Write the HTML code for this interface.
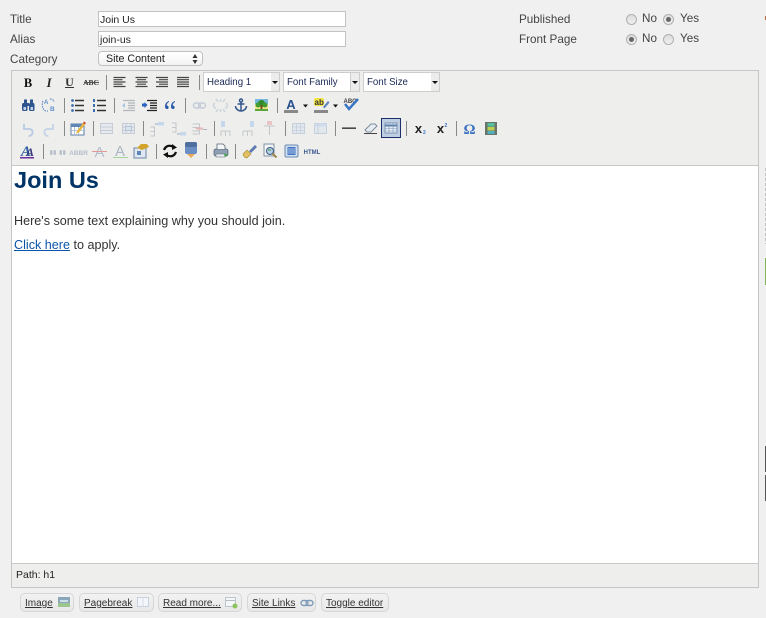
<!DOCTYPE html>
<html><head><meta charset="utf-8">
<style>
html,body{margin:0;padding:0;background:#f0f0f0;}
body{width:766px;height:618px;overflow:hidden;position:relative;font-family:"Liberation Sans",sans-serif;color:#3a3a3a;}
.a{position:absolute;white-space:nowrap;}
.lbl{font-size:11.7px;line-height:14px;color:#444;}
.inp{position:absolute;left:98px;height:14px;border:1px solid #c2c2c2;background:#fff;font-size:10.5px;line-height:16px;color:#222;padding-left:1px;width:245px;overflow:hidden;}
.radio{position:absolute;width:9px;height:9px;border-radius:50%;border:1px solid #b0b0b0;background:linear-gradient(#dcdcdc,#efefef);}
.radio.on:after{content:"";position:absolute;left:2px;top:2px;width:5px;height:5px;border-radius:50%;background:#666;}
.sel{position:absolute;top:72px;height:18px;background:#fff;border:1px solid #cdcdcd;font-size:9.7px;line-height:19px;color:#1b2a55;padding-left:3px;box-sizing:content-box;}
.arr{position:absolute;top:72px;width:8px;height:18px;background:#ececec;border:1px solid #cdcdcd;border-left:0;}
.arr:after{content:"";position:absolute;left:1px;top:8px;border-left:3px solid transparent;border-right:3px solid transparent;border-top:3px solid #111;}
.btn{position:absolute;top:593px;height:17px;border:1px solid #d6d6d6;border-radius:5px;background:linear-gradient(#f2f2f2,#e8e8e8);box-sizing:content-box;font-size:10px;line-height:17px;color:#333;text-decoration:none;}
.btn span{position:absolute;left:4px;top:1px;text-decoration:underline;white-space:nowrap;}
</style></head><body>

<div class="a lbl" style="left:10px;top:13px">Title</div>
<div class="a lbl" style="left:10px;top:33px">Alias</div>
<div class="a lbl" style="left:10px;top:53px">Category</div>
<div class="inp" style="top:11px">Join Us</div>
<div class="inp" style="top:31px">join-us</div>
<div class="a" style="left:98px;top:51px;width:103px;height:13px;border:1px solid #c0c0c0;border-radius:4px;background:linear-gradient(#fff,#f3f3f3);font-size:10.7px;line-height:15px;color:#222;text-indent:7px;overflow:hidden">Site Content
<svg style="position:absolute;left:93px;top:2px" width="6" height="10"><path d="M3 0L5.500 4H.5zM3 10L.5 6h5z" fill="#333"/></svg></div>

<div class="a lbl" style="left:519px;top:13px">Published</div>
<div class="a lbl" style="left:519px;top:33px">Front Page</div>
<div class="radio" style="left:626px;top:14px"></div>
<div class="a lbl" style="left:642px;top:12px">No</div>
<div class="radio on" style="left:663px;top:14px"></div>
<div class="a lbl" style="left:680px;top:12px">Yes</div>
<div class="radio on" style="left:626px;top:34px"></div>
<div class="a lbl" style="left:642px;top:32px">No</div>
<div class="radio" style="left:663px;top:34px"></div>
<div class="a lbl" style="left:680px;top:32px">Yes</div>

<!-- right edge fragments -->
<div class="a" style="left:765px;top:16px;width:1px;height:4px;background:#b5673a"></div>
<div class="a" style="left:765px;top:168px;width:1px;height:76px;background:repeating-linear-gradient(#c4c4c4 0 3px,#f0f0f0 3px 5px)"></div>
<div class="a" style="left:765px;top:258px;width:1px;height:27px;background:#7fb85a"></div>
<div class="a" style="left:765px;top:446px;width:1px;height:26px;background:#555"></div>
<div class="a" style="left:765px;top:475px;width:1px;height:26px;background:#555"></div>

<!-- editor frame -->
<div class="a" style="left:11px;top:70px;width:746px;height:516px;border:1px solid #c6c6c6;background:#eeeeec"></div>
<div class="a" style="left:12px;top:165px;width:746px;background:#fff;border-top:1px solid #c8c8c8;border-bottom:1px solid #c8c8c8;box-sizing:border-box;height:399px"></div>
<div class="a" style="left:14px;top:166px;font-size:23.5px;font-weight:bold;line-height:29px;color:#003366">Join Us</div>
<div class="a" style="left:14px;top:213px;font-size:12.6px;line-height:16px;color:#333">Here's some text explaining why you should join.</div>
<div class="a" style="left:14px;top:237px;font-size:12.6px;line-height:16px;color:#333"><span style="color:#0b55a8;text-decoration:underline">Click here</span> to apply.</div>
<div class="a" style="left:16px;top:569px;font-size:10.5px;line-height:13px;color:#222">Path: h1</div>

<!-- selects -->
<div class="sel" style="left:203px;width:64px">Heading 1</div><div class="arr" style="left:271px"></div>
<div class="sel" style="left:283px;width:63px">Font Family</div><div class="arr" style="left:351px"></div>
<div class="sel" style="left:363px;width:64px">Font Size</div><div class="arr" style="left:431px"></div>

<!-- toolbar icons -->
<svg class="a" style="left:0;top:0;filter:blur(.3px)" width="766" height="170" viewBox="0 0 766 170" font-family="Liberation Serif,serif">
<g fill="#8a8a8a">
<rect x="106" y="75" width="1" height="15"/><rect x="199" y="75" width="1" height="15"/>
<rect x="64" y="98" width="1" height="15"/><rect x="114" y="98" width="1" height="15"/><rect x="185" y="98" width="1" height="15"/><rect x="277" y="98" width="1" height="15"/>
<rect x="64" y="121" width="1" height="15"/><rect x="93" y="121" width="1" height="15"/><rect x="143" y="121" width="1" height="15"/><rect x="214" y="121" width="1" height="15"/><rect x="285" y="121" width="1" height="15"/><rect x="335" y="121" width="1" height="15"/><rect x="406" y="121" width="1" height="15"/><rect x="456" y="121" width="1" height="15"/>
<rect x="43" y="144" width="1" height="15"/><rect x="156" y="144" width="1" height="15"/><rect x="206" y="144" width="1" height="15"/><rect x="235" y="144" width="1" height="15"/>
</g>
<!-- row1 -->
<text x="28" y="87" font-size="12.500" font-weight="bold" text-anchor="middle" fill="#111">B</text>
<text x="49" y="87" font-size="12.500" font-weight="bold" font-style="italic" text-anchor="middle" fill="#222">I</text>
<text x="69.500" y="86" font-size="12" font-weight="bold" text-anchor="middle" fill="#333">U</text><rect x="65" y="87" width="9" height="1" fill="#333"/>
<text x="91" y="85" font-size="7.500" font-weight="bold" text-anchor="middle" fill="#333">ABC</text><rect x="84" y="82" width="15" height="1" fill="#555"/>
<g stroke="#444" stroke-width="1.200" fill="none">
<path d="M113.500 77.500h12M113.500 79.700h9M113.500 82h12M113.500 84.200h9M113.500 86.500h12"/>
<path d="M135.500 77.500h12M137 79.700h9M135.500 82h12M137 84.200h9M135.500 86.500h12"/>
<path d="M156 77.500h12M159 79.700h9M156 82h12M159 84.200h9M156 86.500h12"/>
<path d="M177 77.500h12M177 79.700h12M177 82h12M177 84.200h12M177 86.500h12"/>
</g>
<!-- row2 -->
<g fill="#2f5590"><rect x="22" y="103" width="5.500" height="8" rx="1.500"/><rect x="29" y="103" width="5.500" height="8" rx="1.500"/><rect x="24" y="99.500" width="3" height="5"/><rect x="30" y="99.500" width="3" height="5"/><rect x="27" y="103" width="2" height="3"/></g>
<g fill="#c3d4ea"><rect x="23.500" y="107" width="2.500" height="3"/><rect x="30.500" y="107" width="2.500" height="3"/></g>
<g fill="none" stroke="#5f8fcc" stroke-width="1.200" stroke-dasharray="1.500 1"><path d="M43 101c-1 3-1 6 1 9 1 1 3 1 4 1"/><path d="M50 99c2 0 4 1 4 3"/></g>
<text x="44" y="104" font-family="Liberation Sans" font-size="6" font-weight="bold" fill="#5f8fcc">A</text>
<text x="50" y="111" font-family="Liberation Sans" font-size="6.500" font-weight="bold" fill="#5f8fcc">B</text>
<path d="M75 100.500h9M75 105.500h9M75 110.500h9" stroke="#333" stroke-width="1.500"/>
<g fill="#3c6db0"><circle cx="72.500" cy="100.500" r="1.400"/><circle cx="72.500" cy="105.500" r="1.400"/><circle cx="72.500" cy="110.500" r="1.400"/></g>
<path d="M97 100.500h9M97 105.500h9M97 110.500h9" stroke="#333" stroke-width="1.500"/>
<path d="M94 99v3M94 104v3M94 109v3" stroke="#3c6db0" stroke-width="2"/>
<path d="M123 100.500h12M128 103h7M128 105.500h7M128 108h7M123 110.500h12" stroke="#b0b6bc" stroke-width="1.200"/>
<path d="M122 105.500l3-2.500v5z" fill="#a9c3e4"/>
<path d="M147 100.500h10M150 103h7M150 105.500h7M150 108h7M147 110.500h10" stroke="#222" stroke-width="1.300"/>
<path d="M142 103.500h2.500v-1.500l3 3-3 3v-1.500H142z" fill="#2a62c0"/>
<path d="M169 101c-3 1-4 3-4 6 0 2 3 3 3.500 1s-1-2.500-1.800-2.500c0-1.500 1-3 2.300-3.500zM175 101c-3 1-4 3-4 6 0 2 3 3 3.500 1s-1-2.500-1.800-2.500c0-1.500 1-3 2.300-3.500z" fill="#2a5aa8"/>
<g fill="none" stroke="#c3ccd8" stroke-width="1.500"><rect x="193.500" y="103" width="7" height="5" rx="2.500"/><rect x="198.500" y="103" width="7" height="5" rx="2.500"/></g>
<g fill="none" stroke="#cdd4dc" stroke-width="1.500"><path d="M215 103c-2 1-2 5 1 5M226 103c2 1 2 5-1 5"/><path d="M216 99l2 3M225 99l-2 3M216 112l2-3M225 112l-2-3M220.500 99v3M220.500 109v3"/></g>
<g fill="none" stroke="#34598c" stroke-width="1.500"><circle cx="241" cy="100.500" r="1.500"/><path d="M241 102v9M237.500 104h7M235.500 106c0 3 3 5 5.500 5s5.500-2 5.500-5"/></g>
<rect x="255" y="99" width="13" height="12" fill="#f4e48a"/><rect x="255" y="99" width="13" height="5" fill="#79b8dc"/><circle cx="261.500" cy="103.500" r="3.500" fill="#2f8a2a"/><circle cx="258" cy="105" r="2.500" fill="#3e9c30"/><circle cx="265" cy="105" r="2.500" fill="#3e9c30"/><rect x="260.500" y="105" width="2" height="5" fill="#7a4a1e"/><rect x="255" y="109" width="13" height="2" fill="#5aa83a"/>
<text x="291" y="109" font-family="Liberation Sans" font-size="13" font-weight="bold" text-anchor="middle" fill="#27518f">A</text><rect x="284" y="110" width="14" height="3" fill="#888"/>
<path d="M303 104.500h5l-2.500 3z" fill="#111"/>
<rect x="314" y="98" width="10" height="8" rx="2" fill="#f0e545"/><text x="314.500" y="105" font-family="Liberation Sans" font-size="8" font-weight="bold" fill="#333">ab</text><path d="M323 107l5-6 1.500 1.500-5 6z" fill="#5f84bc"/><rect x="314" y="110" width="14" height="3" fill="#888"/>
<path d="M333 104.500h5l-2.500 3z" fill="#111"/>
<text x="350" y="103" font-family="Liberation Sans" font-size="6" font-weight="bold" text-anchor="middle" fill="#444">ABC</text>
<path d="M345 104l4 5 9-10" fill="none" stroke="#3a74c4" stroke-width="2.500"/>
<!-- row3 -->
<g fill="none" stroke="#bccde4" stroke-width="2"><path d="M24 124v5h5c3 0 4 2 3.500 4s-2 3-4 3"/><path d="M53 124v5h-5c-3 0-4 2-3.500 4s2 3 4 3" stroke="#c8d6e8"/></g>
<rect x="71" y="124" width="13" height="11" fill="#fff" stroke="#5e7fa8"/><rect x="71" y="124" width="13" height="3" fill="#5e86b8"/><path d="M74.500 127v8M78.500 127v8M71 130.500h13" stroke="#9eb5cf" stroke-width=".8"/>
<path d="M77 131l6-8 2 1.500-6 8-3 1z" fill="#e8b63c"/><path d="M83 123l1-1.500 2 1.500-1 1.500z" fill="#d04a2a"/>
<g fill="#e6e9ee" stroke="#c5ccd5"><rect x="100.500" y="123.500" width="12" height="10"/><rect x="122.500" y="123.500" width="12" height="10"/></g>
<path d="M100.500 127h12M100.500 130.500h12" stroke="#c5ccd5"/><path d="M126 123.500v10M131 123.500v10M122.500 127h12M122.500 130.500h12" stroke="#c5ccd5"/>
<rect x="125.500" y="126.500" width="6" height="4" fill="#dbe4ef" stroke="#b3c2d4"/>
<g fill="none" stroke="#c3c7cc"><path d="M150.500 127h4v9h-4M150.500 131.500h4"/><path d="M172 123h4v9h-4M172 127.500h4"/><path d="M192.500 124h7v10h-7M192.500 127.500h7M192.500 131h7"/></g>
<rect x="158" y="122" width="6" height="3.500" fill="#c5d7ec"/><path d="M155 124h3" stroke="#99aabd"/><rect x="180" y="132" width="6" height="3.500" fill="#c5d7ec"/><path d="M177 134h3" stroke="#99aabd"/><path d="M196 128.500h7" stroke="#e5b5b5" stroke-width="2"/><path d="M203 129.500h4" stroke="#b0b4b8"/>
<g fill="none" stroke="#c3c7cc"><path d="M221 131v5M221 131h9v5M225.500 131v5"/><path d="M243 131v5M243 131h9v5M247.500 131v5"/><path d="M264 126h11M269.500 126v9"/></g>
<g fill="#c5d7ec"><rect x="221" y="121" width="4" height="6"/><rect x="250" y="121" width="4" height="6"/></g><rect x="267" y="121" width="5" height="4" fill="#e9c5c5"/>
<g fill="#e3e8ef" stroke="#c5d0dc"><rect x="292.500" y="123.500" width="12" height="10"/><rect x="314.500" y="123.500" width="12" height="10"/></g>
<path d="M296.500 123.500v10M300.500 123.500v10M292.500 127h12M292.500 130.500h12" stroke="#c5d0dc" stroke-width=".8"/><rect x="314.500" y="123.500" width="12" height="3" fill="#cfdcec"/><path d="M318 123.500v10" stroke="#c5d0dc"/>
<rect x="342" y="127.500" width="14" height="1.300" fill="#222"/>
<path d="M365 130l6-6h4l2 2-6 6h-4z" fill="#e8edf3" stroke="#7d8da0"/><path d="M364 133.500h13" stroke="#444"/>
<rect x="381.500" y="118.500" width="19" height="19" fill="#bfcfe2" stroke="#1c2f6a"/>
<rect x="385" y="123" width="12" height="10" fill="#e9edf3" stroke="#6684ab" stroke-width=".8"/><path d="M385 125.500h12" stroke="#5c80ae" stroke-width="2"/><path d="M389 123v10M393 123v10M385 128.500h12M385 131h12" stroke="#7b97bb" stroke-width=".6"/>
<text x="418.500" y="133" font-family="Liberation Sans" font-size="13" font-weight="bold" text-anchor="middle" fill="#222">x</text><text x="423" y="134" font-family="Liberation Sans" font-size="5" font-weight="bold" fill="#3a74c4">2</text>
<text x="440.500" y="133" font-family="Liberation Sans" font-size="13" font-weight="bold" text-anchor="middle" fill="#222">x</text><text x="444.500" y="127" font-family="Liberation Sans" font-size="5" font-weight="bold" fill="#3a74c4">2</text>
<text x="469.500" y="134" font-family="Liberation Serif" font-size="15" font-weight="bold" text-anchor="middle" fill="#3a70c0">Ω</text>
<rect x="485" y="122" width="12" height="13" fill="#6a7468"/><rect x="487.500" y="123" width="7" height="3.500" fill="#55c0a0"/><rect x="487.500" y="127" width="7" height="3.500" fill="#c0d050"/><rect x="487.500" y="131" width="7" height="3" fill="#50b0c0"/>
<!-- row4 -->
<text x="26" y="156" font-family="Liberation Serif" font-size="15" font-weight="bold" font-style="italic" text-anchor="middle" fill="#2d5a9c">A</text>
<text x="30" y="156" font-family="Liberation Serif" font-size="12" font-weight="bold" font-style="italic" text-anchor="middle" fill="#3a3a7a">A</text><rect x="20" y="157" width="14" height="1.500" fill="#6a2f9c"/>
<g fill="#b9c2cc"><rect x="50" y="150" width="2.500" height="5" rx="1"/><rect x="53.500" y="150" width="2.500" height="5" rx="1"/><rect x="59.500" y="150" width="2.500" height="5" rx="1"/><rect x="63" y="150" width="2.500" height="5" rx="1"/></g>
<text x="78.500" y="155" font-family="Liberation Sans" font-size="6.500" font-weight="bold" text-anchor="middle" fill="#b5bec9">ABBR</text>
<text x="99.500" y="157" font-family="Liberation Sans" font-size="15" text-anchor="middle" fill="#b4bfcc">A</text><rect x="92" y="151" width="15" height="1" fill="#e59a9a"/>
<text x="120" y="156" font-family="Liberation Sans" font-size="15" text-anchor="middle" fill="#a9b7c6">A</text><rect x="113" y="157" width="15" height="1" fill="#a6d49a"/>
<rect x="134" y="148" width="12" height="10" fill="#dfe8f2" stroke="#6c86a6"/><path d="M137 148l4-4h6l2 3-7 3z" fill="#d4a32c"/><rect x="137" y="151" width="4" height="4" fill="#5f84b0"/>
<g fill="none" stroke="#111" stroke-width="2.200"><path d="M164 150c1-3 4-5 7-4 1 0 2 .5 3 1"/><path d="M176 152c-1 3-4 5-7 4-1 0-2-.5-3-1"/></g><path d="M172 144l5 3.500-5 2.500zM168 158l-5-3.500 5-2.500z" fill="#111"/>
<rect x="185" y="142" width="12" height="12" rx="2" fill="#6b8ec4"/><rect x="185" y="142" width="12" height="5" rx="2" fill="#4f6f9e"/><path d="M187 154h8l-4 4z" fill="#e8a85a"/>
<rect x="214" y="149" width="14" height="7" rx="2" fill="#8fa0b3" stroke="#566678" stroke-width=".8"/><path d="M217 149v-5h6l2 2v3" fill="#f4f6f8" stroke="#566678" stroke-width=".8"/><rect x="216" y="154" width="9" height="3" fill="#e8ecf0" stroke="#566678" stroke-width=".5"/><circle cx="225.500" cy="155" r="1.300" fill="#3aa83a"/>
<path d="M249 151l6-6 2 2-6 6z" fill="#5a7ab0"/><path d="M243 154l4-4 4 4-4 4c-2 0-4-2-4-4z" fill="#e0c060" stroke="#a88a30" stroke-width=".6"/>
<rect x="264" y="144" width="10" height="12" fill="#f2f4f8" stroke="#667a94" stroke-width=".8"/><circle cx="270" cy="151" r="3.500" fill="#b6d0e8" stroke="#3a5a80"/><path d="M272.500 153.500l4 4" stroke="#a08850" stroke-width="2"/><path d="M268 150h3" stroke="#3a9a3a"/>
<rect x="285" y="145" width="13" height="12" rx="1.500" fill="#d3e0f0" stroke="#6888b0"/><rect x="287.500" y="147" width="8" height="8" fill="#3f74c0"/><path d="M288 149h7M288 151h7M288 153h7" stroke="#cfe0f4" stroke-width=".7"/>
<text x="312" y="154" font-family="Liberation Sans" font-size="6" font-weight="bold" text-anchor="middle" fill="#3a5a90">HTML</text>
</svg>

<!-- buttons -->
<div class="btn" style="left:20px;width:52px"><span>Image</span>
<svg style="position:absolute;left:37px;top:3px" width="12" height="10"><rect width="12" height="10" fill="#8aa6b8"/><rect y="6" width="12" height="4" fill="#9cc48e"/><rect x="2" y="3" width="8" height="2" fill="#cfe0ea"/></svg></div>
<div class="btn" style="left:79px;width:73px"><span>Pagebreak</span>
<svg style="position:absolute;left:57px;top:3px" width="12" height="10"><rect x=".5" y=".5" width="11" height="9" fill="#f3f6fa" stroke="#c9d2dc"/><path d="M6 .5v9" stroke="#d8dfe7"/></svg></div>
<div class="btn" style="left:158px;width:82px"><span>Read more...</span>
<svg style="position:absolute;left:66px;top:3px" width="13" height="12"><rect x=".5" y=".5" width="10" height="9" fill="#f4f6f8" stroke="#bcc4cc"/><path d="M1 3.500h9" stroke="#b5bcc4"/><circle cx="10" cy="9" r="2.500" fill="#8cc45a"/></svg></div>
<div class="btn" style="left:247px;width:67px"><span>Site Links</span>
<svg style="position:absolute;left:52px;top:5px" width="14" height="8" fill="none" stroke="#7f9bb8" stroke-width="1.400"><rect x="1" y="1.500" width="7" height="5" rx="2.500"/><rect x="6" y="1.500" width="7" height="5" rx="2.500"/></svg></div>
<div class="btn" style="left:321px;width:66px"><span>Toggle editor</span></div>

</body></html>
